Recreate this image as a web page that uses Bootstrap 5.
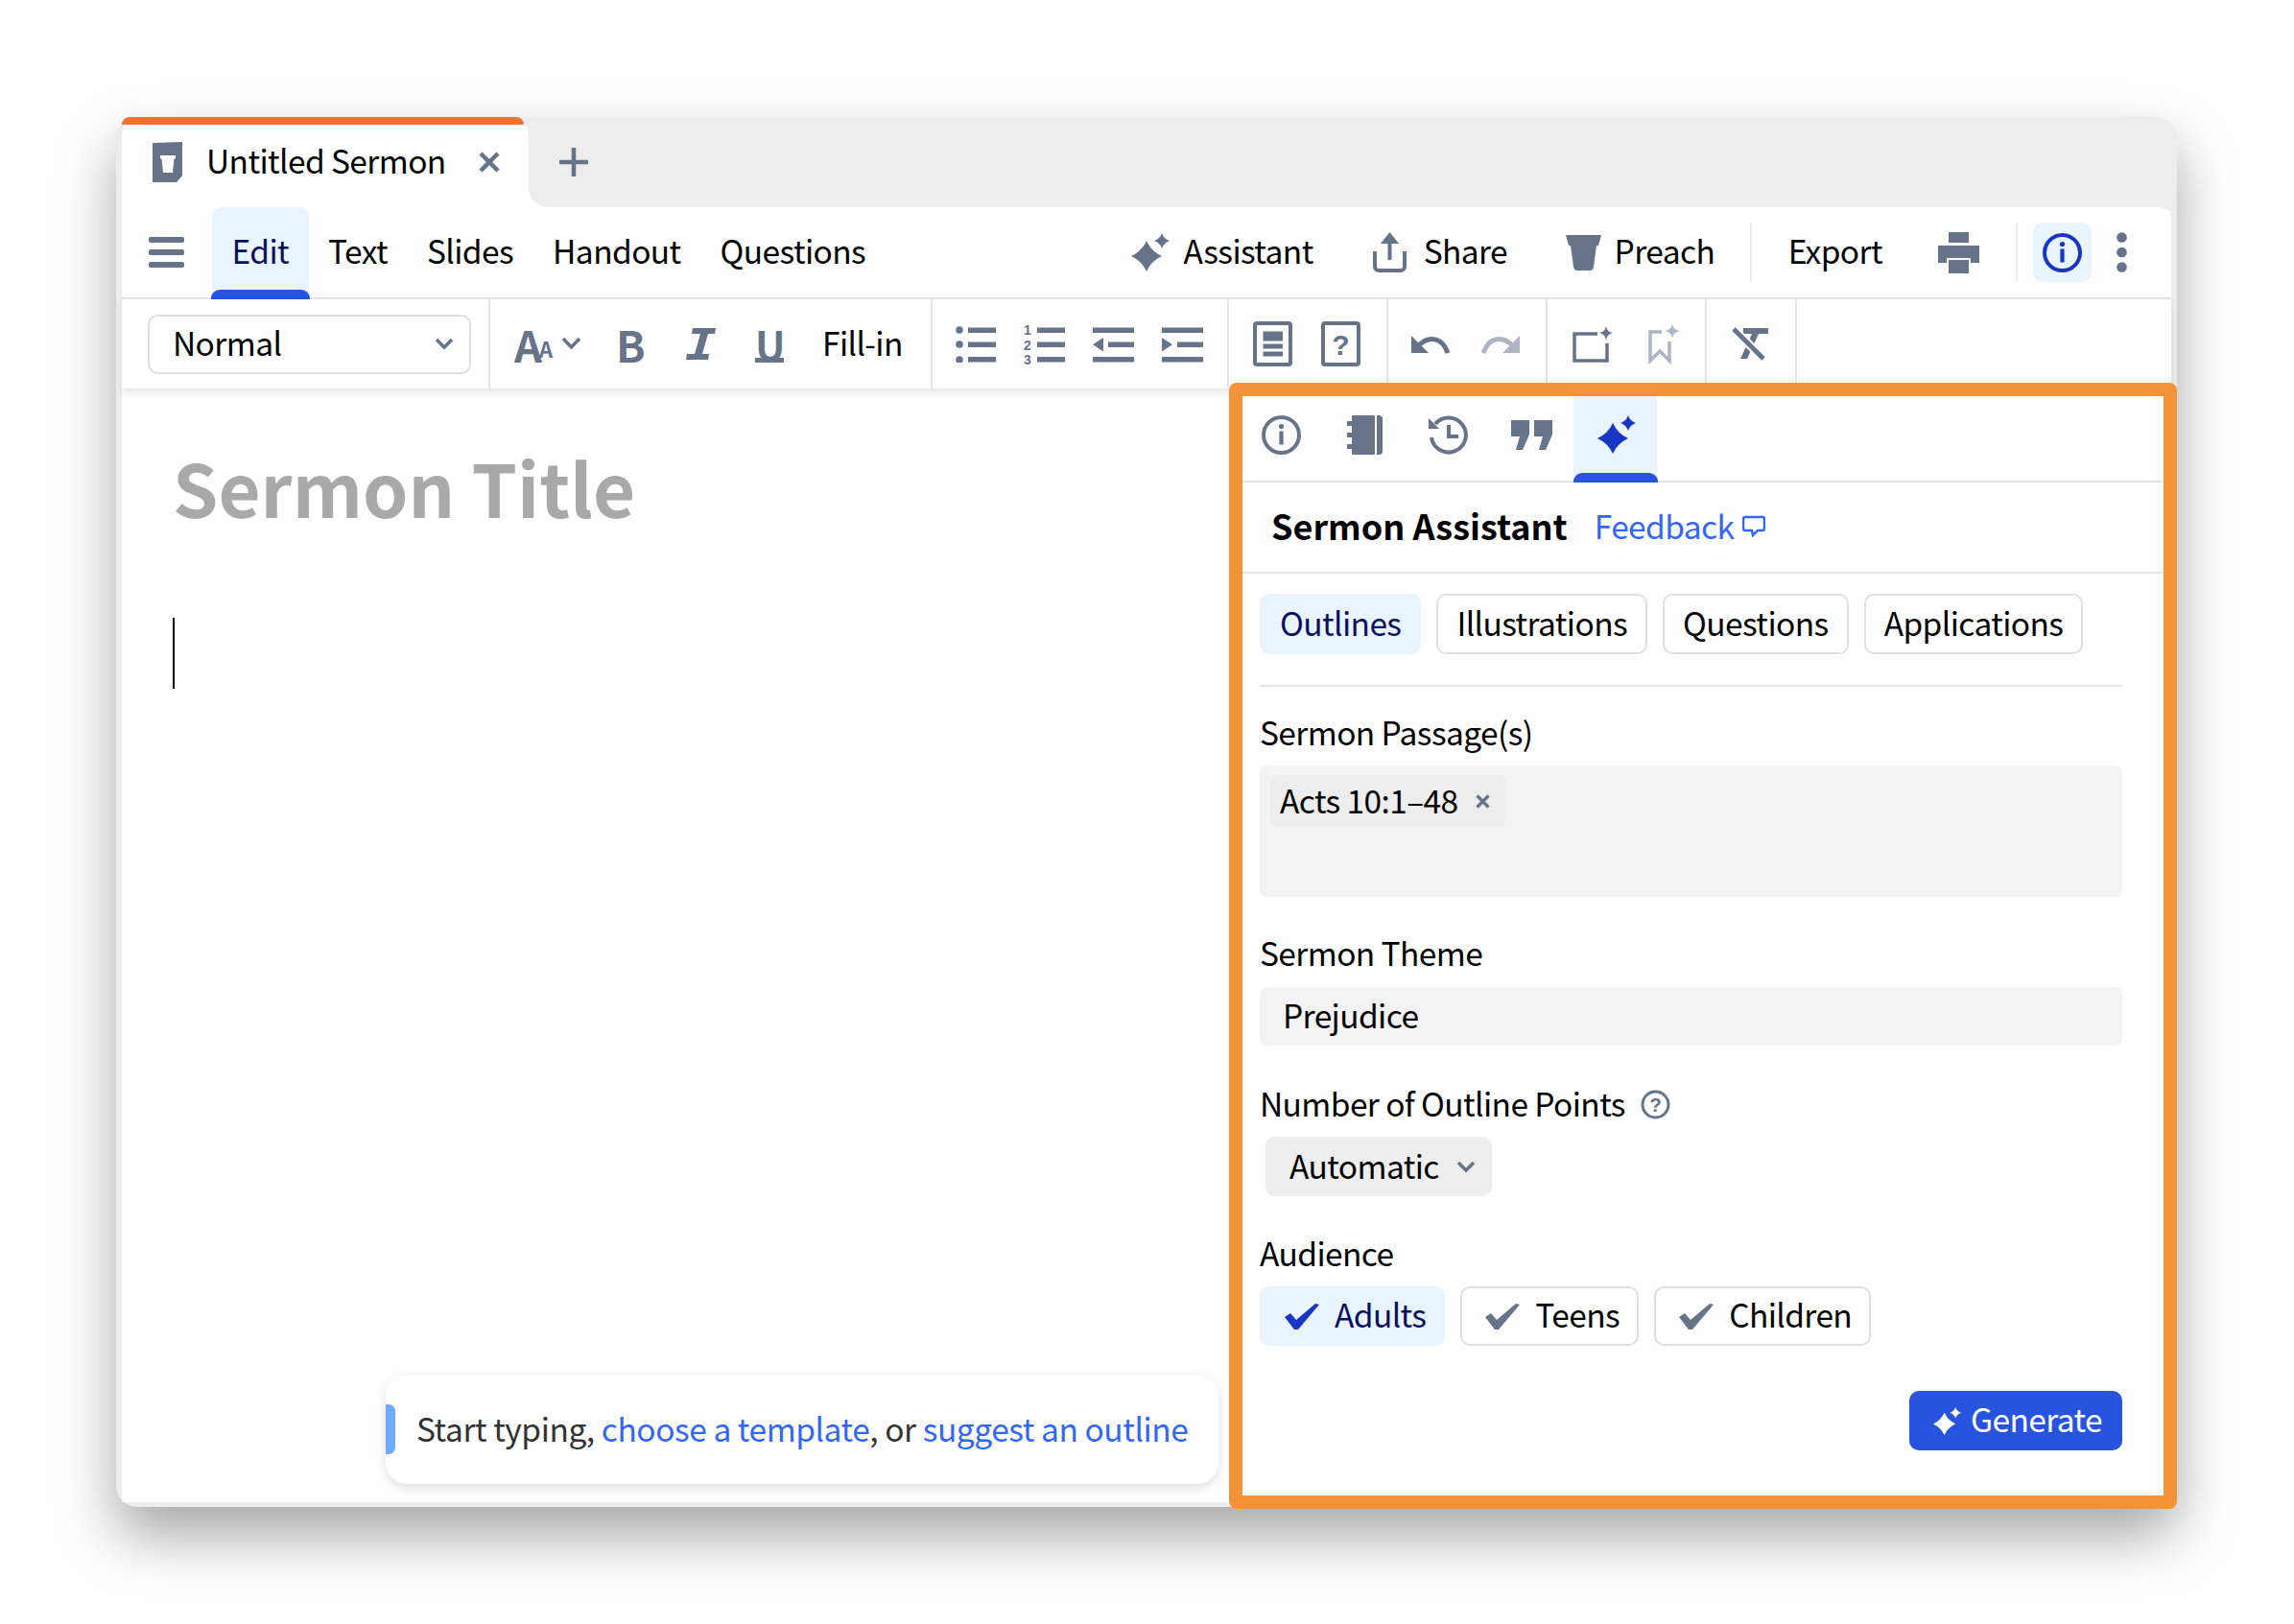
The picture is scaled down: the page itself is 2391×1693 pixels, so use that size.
<!DOCTYPE html>
<html lang="en">
<head>
<meta charset="utf-8">
<title>Untitled Sermon</title>
<link href="https://cdn.jsdelivr.net/npm/bootstrap@5.3.0/dist/css/bootstrap.min.css" rel="stylesheet">
<style>
html{background:#fff;overflow:hidden}
body{font-family:"Noto Sans CJK SC","Liberation Sans",sans-serif;color:#000;font-size:33.5px;letter-spacing:-.6px;line-height:44px;padding:122px 0 0 121px;min-height:100vh;background:#fff}
svg{display:block;flex:none}
.ico{color:#667389}
.lift{padding-bottom:4px}
.appwin{width:2148px;height:1449px;background:#ededed;border-radius:22px;box-shadow:0 30px 60px rgba(0,0,0,.35);padding:0 6px 5px}
.tabstrip{height:94px}
.doctab{position:relative;width:424px;background:#fff;border-radius:20px 20px 0 0;padding-left:32px}
.doctab::before{content:"";position:absolute;left:0;right:5px;top:0;height:8px;background:#f0722f;clip-path:inset(0 0 0 0 round 20px 20px 0 0)}
.tabtitle{margin-left:25px}
.tabx{margin-left:33px}
.tabrest{position:relative;padding-left:32px}
.tabrest::before{content:"";position:absolute;left:0;bottom:0;width:20px;height:20px;background:radial-gradient(circle at 100% 0,transparent 19.5px,#fff 20px)}
.sheet{background:#fff;height:1350px;border-top-right-radius:12px}
.menubar{height:96px;border-bottom:2px solid #e5e5e5}
.burger{margin-left:28px;margin-right:29px}
.menuitem{position:relative;padding:0 20.5px 4px;color:#000;display:flex;align-items:center;text-decoration:none}
.menuitem.on{background:#eaf4fe;color:#07105f;border-radius:10px 10px 0 0}
.menuitem.on::after{content:"";position:absolute;left:-1px;right:-1px;bottom:-2px;height:10px;background:#2753de;border-radius:9px 9px 0 0}
.acts{padding-right:46px}
.act1{gap:14.5px}
.act2{gap:18px;margin-left:62px}
.act3{gap:14px;margin-left:60.5px}
.vsep{width:2px;height:62px;background:#ececec}
.ml365{margin-left:36.5px}
.ml38{margin-left:38px}
.ml58{margin-left:58px}
.infobtn{margin-left:16px;width:61px;height:62px;background:#eaf4fe;border-radius:10px;color:#1935c4}
.dotsbtn{margin-left:26px}
.fmtbar{position:relative;height:93px;box-shadow:0 4px 8px rgba(0,0,0,.1)}
.fmtgrp{border-right:2px solid #e5e5e5;flex:none}
.g1{width:384px;padding-left:27px}
.g2{width:461px;padding-left:25px}
.g3{width:309px;padding-left:24px;gap:29px}
.g4{width:166px;padding-left:25px;gap:30px}
.g5{width:166px;padding-left:24px;gap:31px}
.g6{width:166px;padding-left:26px;gap:37px}
.g7{width:94px;padding-left:26px}
.stylesel{width:337px;height:62px;border:2px solid #e0e0e0;border-radius:10px;padding:0 50px 4px 24px;font-size:33.5px;letter-spacing:-.6px;line-height:44px;color:#000;font-family:inherit;background-position:right 16px center;background-size:20px 13px;background-image:url("data:image/svg+xml,%3Csvg xmlns='http://www.w3.org/2000/svg' viewBox='0 0 20 13'%3E%3Cpath d='M2 2l8 8 8-8' fill='none' stroke='%23667389' stroke-width='3.5'/%3E%3C/svg%3E")}
.glyphs{font-weight:700;color:#667389;letter-spacing:0;line-height:38px}
.gA{font-size:45px;width:26px;text-align:center}
.ga{font-size:22px;width:14px;text-align:center}
.aachev{margin-left:9px;margin-bottom:2px}
.gB{margin-left:36px;font-size:45px;width:26px;text-align:center}
.gI{margin-left:47px}
.gU{margin-left:41px;font-size:42px;width:30px;text-align:center;border-bottom:5px solid #667389;line-height:36px;height:38px;margin-top:1px}
.ml40{margin-left:40px}
.svt{font-family:"Liberation Sans",sans-serif;font-weight:700;fill:currentColor;letter-spacing:0}
.work{height:1161px}
.editor{position:relative;width:1154px;flex:none;padding-left:53px}
.doctitle{margin:62px 0 0;font-size:76px;line-height:80px;font-weight:700;color:#a9a9a9;font-family:inherit;letter-spacing:0}
.caret1{width:2px;height:74px;background:#000;margin-top:97px}
.hintbox{position:absolute;left:275px;top:1028px;width:868px;height:114px;background:#fff;border-radius:22px;box-shadow:0 4px 12px rgba(0,0,0,.13);padding:0 0 3px 32px;color:#333;letter-spacing:-.45px}
.hintbox::before{content:"";position:absolute;left:0;top:31px;width:10px;height:52px;background:#6eaaff;border-radius:0 7px 7px 0}
.lnk{color:#3466f6;text-decoration:none}
.aipanel{position:relative;z-index:2;width:988px;height:1174px;flex:none;margin:-6px -6px -7px 0;border:14px solid #f39237;border-radius:8px;background:#fff}
.icotabs{height:90px;border-bottom:2px solid #e5e5e5;padding:20px 0 0 20px}
.it2{margin-left:48px}.it3{margin-left:47px}.it4{margin-left:45px;margin-top:5px}
.sparktab{position:relative;margin:-20px 0 0 22px;width:87px;height:88px;background:#eaf4fe;padding:20px 0 0 25px;color:#1935c4}
.sparktab::after{content:"";position:absolute;left:0;right:-1px;bottom:-2px;height:10px;background:#2753de;border-radius:9px 9px 0 0}
.aihead{height:95px;border-bottom:2px solid #e5e5e5;padding-left:30px}
.aititle{font-weight:700;font-size:36px;margin:0;line-height:44px;font-family:inherit;letter-spacing:0;padding-bottom:6px}
.fdbk{margin-left:28px;padding-bottom:4px}
.fdbkico{margin-left:9px;margin-bottom:3px;color:#3466f6}
.aiform{padding:21px 43px 0 18px}
.pillrow{gap:16px;padding-bottom:32px;border-bottom:2px solid #e5e5e5}
.pillbtn{height:63px;padding:0 19px 4px;font-size:33.5px;letter-spacing:-.6px;line-height:44px;border:2px solid #e0e0e0;border-radius:10px;background:#fff;color:#000;font-family:inherit}
.pillbtn.on{background:#eaf4fe;border-color:#eaf4fe;color:#07105f}
.fieldlab{margin:0;display:flex;align-items:center;line-height:44px}
.lab1{margin:25px 0 13px}
.lab2{margin:36px 0 14px}
.lab3{margin:38px 0 13px}
.lab4{margin:37px 0 13px}
.psgbox{height:137px;background:#f3f3f3;border-radius:8px;padding:10px 11px}
.psgtag{height:54px;background:#ededed;border-radius:8px;padding:0 17px 3px 10px;gap:18px}
.tagx{margin-top:3px}
.themeinp{height:61px;background:#f3f3f3;border:0;border-radius:8px;padding:0 24px 4px;font-size:33.5px;letter-spacing:-.6px;color:#000;font-family:inherit;line-height:44px}
.helpico{margin-left:16px;margin-top:3px}
.countsel{width:236px;height:62px;margin-left:6px;border:0;border-radius:10px;background-color:#eee;padding:0 40px 3px 25px;font-size:33.5px;letter-spacing:-.6px;line-height:44px;color:#000;font-family:inherit;background-position:right 17px center;background-size:20px 13px;background-image:url("data:image/svg+xml,%3Csvg xmlns='http://www.w3.org/2000/svg' viewBox='0 0 20 13'%3E%3Cpath d='M2 2l8 8 8-8' fill='none' stroke='%23667389' stroke-width='3.5'/%3E%3C/svg%3E")}
.audrow{gap:16px}
.audbtn{height:62px;padding:0 18px 0 24px;gap:16px;display:flex;align-items:center;font-size:33.5px;letter-spacing:-.6px;line-height:44px;border:2px solid #e0e0e0;border-radius:10px;background:#fff;color:#000;font-family:inherit}
.audbtn.on{background:#eaf4fe;border-color:#eaf4fe;color:#07105f}
.audbtn.on svg{color:#1935c4}
.audbtn svg{color:#667389}
.genrow{margin-top:47px}
.genbtn{height:62px;padding:0 21px 0 25px;gap:10px;display:flex;align-items:center;background:#2753de;border:0;border-radius:10px;color:#fff;font-size:33.5px;letter-spacing:-.6px;line-height:44px;font-family:inherit}
.genbtn:hover{background:#2753de;color:#fff}
</style>
</head>
<body>
<svg width="0" height="0" class="position-absolute">
<defs>
<symbol id="spark" viewBox="0 0 40 40"><path fill="currentColor" d="M16 8Q21 19 32 24Q21 29 16 40Q11 29 0 24Q11 19 16 8Z"/><path fill="currentColor" d="M32 0Q34 6 40 8Q34 10 32 16Q30 10 24 8Q30 6 32 0Z"/></symbol>
<symbol id="infoc" viewBox="0 0 41 41"><circle cx="20.5" cy="20.5" r="18.5" fill="none" stroke="currentColor" stroke-width="4"/><circle cx="20.5" cy="11.5" r="2.6" fill="currentColor"/><rect x="18.4" y="16.5" width="4.2" height="14" fill="currentColor"/></symbol>
<symbol id="tick" viewBox="0 0 36 27"><path fill="currentColor" d="M0 14L6 10L12 17L32 0L36 1L14 27H10Z"/></symbol>
</defs>
</svg>

<div class="appwin d-flex flex-column">
  <div class="tabstrip d-flex">
    <div class="doctab d-flex align-items-center">
      <svg class="ico" width="31" height="42" viewBox="0 0 31 42"><path fill="currentColor" d="M0 1L31 0V35L25 42H0Z"/><path fill="#fff" d="M8 14H24V17.500H22.500L21 32H11L9.500 17.500H8Z"/></svg>
      <span class="tabtitle lift">Untitled Sermon</span>
      <svg class="ico tabx" width="24" height="22" viewBox="0 0 24 22"><path d="M3 2L21 20M21 2L3 20" stroke="currentColor" stroke-width="4.5" fill="none"/></svg>
    </div>
    <div class="tabrest flex-grow-1 d-flex align-items-center">
      <svg class="ico" width="30" height="30" viewBox="0 0 30 30"><path d="M15 1V29M1 15H29" stroke="currentColor" stroke-width="4.5" fill="none" stroke-linecap="round"/></svg>
    </div>
  </div>

  <div class="sheet d-flex flex-column">
    <div class="menubar d-flex align-items-stretch">
      <svg class="ico burger align-self-center" width="37" height="32" viewBox="0 0 37 32"><rect width="37" height="6" rx="2" fill="currentColor"/><rect y="13" width="37" height="6" rx="2" fill="currentColor"/><rect y="26" width="37" height="6" rx="2" fill="currentColor"/></svg>
      <nav class="nav flex-nowrap">
        <a class="menuitem on" href="#">Edit</a>
        <a class="menuitem" href="#">Text</a>
        <a class="menuitem" href="#">Slides</a>
        <a class="menuitem" href="#">Handout</a>
        <a class="menuitem" href="#">Questions</a>
      </nav>
      <div class="acts ms-auto d-flex align-items-center">
        <div class="d-flex align-items-center act1"><svg class="ico" width="40" height="40"><use href="#spark"/></svg><span class="lift">Assistant</span></div>
        <div class="d-flex align-items-center act2"><svg class="ico" width="35" height="42" viewBox="0 0 35 42"><path d="M2 20V36a4 4 0 0 0 4 4H29a4 4 0 0 0 4-4V20M17.5 8V29" fill="none" stroke="currentColor" stroke-width="4"/><path d="M17.5 0L8 12H27Z" fill="currentColor"/></svg><span class="lift">Share</span></div>
        <div class="d-flex align-items-center act3"><svg class="ico" width="37" height="37" viewBox="0 0 37 37"><path fill="currentColor" d="M0 0H37L34 11H32L29 33Q28.5 37 25 37H12Q8.500 37 8 33L5 11H3Z"/></svg><span class="lift">Preach</span></div>
        <div class="vsep ml365"></div>
        <span class="ml38 lift">Export</span>
        <svg class="ico ml58" width="43" height="43" viewBox="0 0 43 43"><rect x="11" width="21" height="11" fill="currentColor"/><rect y="14" width="43" height="18" fill="currentColor"/><rect x="9" y="27" width="25" height="16" fill="#fff"/><rect x="11" y="29" width="21" height="14" fill="currentColor"/></svg>
        <div class="vsep ml38"></div>
        <div class="infobtn d-flex align-items-center justify-content-center"><svg width="41" height="41"><use href="#infoc"/></svg></div>
        <svg class="ico dotsbtn" width="11" height="42" viewBox="0 0 11 42"><circle cx="5.500" cy="5.500" r="5.300" fill="currentColor"/><circle cx="5.500" cy="21" r="5.300" fill="currentColor"/><circle cx="5.500" cy="36.500" r="5.300" fill="currentColor"/></svg>
      </div>
    </div>

    <div class="fmtbar d-flex align-items-stretch">
      <div class="fmtgrp g1 d-flex align-items-center">
        <select class="form-select stylesel" aria-label="Style"><option>Normal</option></select>
      </div>
      <div class="fmtgrp g2 d-flex align-items-center">
        <span class="glyphs gA">A</span><span class="glyphs ga align-self-center mt-2">A</span>
        <svg class="ico aachev" width="21" height="14" viewBox="0 0 21 14"><path d="M2 2l8.500 9 8.500-9" fill="none" stroke="currentColor" stroke-width="3.500"/></svg>
        <span class="glyphs gB">B</span>
        <svg class="ico gI" width="31" height="33" viewBox="0 0 31 33"><path fill="currentColor" d="M7 0H31L30 6H23L17 27H24L23 33H0L1 27H9L15 6H6Z"/></svg>
        <span class="glyphs gU">U</span>
        <span class="ml40 lift">Fill-in</span>
      </div>
      <div class="fmtgrp g3 d-flex align-items-center">
        <svg class="ico" width="42" height="38" viewBox="0 0 42 38"><circle cx="4" cy="4" r="3.800" fill="currentColor"/><circle cx="4" cy="19" r="3.800" fill="currentColor"/><circle cx="4" cy="35" r="3.800" fill="currentColor"/><rect x="13" y="1.500" width="29" height="5.500" fill="currentColor"/><rect x="13" y="16.500" width="29" height="5.500" fill="currentColor"/><rect x="13" y="32" width="29" height="5.500" fill="currentColor"/></svg>
        <svg class="ico" width="43" height="48" viewBox="0 0 43 48"><text class="svt" x="0" y="13.500" font-size="14">1</text><text class="svt" x="0" y="29.500" font-size="14">2</text><text class="svt" x="0" y="44.500" font-size="14">3</text><rect x="14" y="6.500" width="29" height="5.500" fill="currentColor"/><rect x="14" y="21.500" width="29" height="5.500" fill="currentColor"/><rect x="14" y="37" width="29" height="5.500" fill="currentColor"/></svg>
        <svg class="ico" width="43" height="38" viewBox="0 0 43 38"><rect y="1.500" width="43" height="5.500" fill="currentColor"/><rect x="16" y="16.500" width="27" height="5.500" fill="currentColor"/><rect y="32" width="43" height="5.500" fill="currentColor"/><path d="M0 19.200L11 12V26.500Z" fill="currentColor"/></svg>
        <svg class="ico" width="43" height="38" viewBox="0 0 43 38"><rect y="1.500" width="43" height="5.500" fill="currentColor"/><rect x="16" y="16.500" width="27" height="5.500" fill="currentColor"/><rect y="32" width="43" height="5.500" fill="currentColor"/><path d="M11 19.200L0 12V26.500Z" fill="currentColor"/></svg>
      </div>
      <div class="fmtgrp g4 d-flex align-items-center">
        <svg class="ico" width="41" height="47" viewBox="0 0 41 47"><rect x="2" y="2" width="37" height="43" rx="2" fill="none" stroke="currentColor" stroke-width="4"/><rect x="10.500" y="10.500" width="20.500" height="10" fill="currentColor"/><rect x="10.500" y="23.500" width="20.500" height="5" fill="currentColor"/><rect x="10.500" y="31.500" width="20.500" height="5" fill="currentColor"/></svg>
        <svg class="ico" width="41" height="47" viewBox="0 0 41 47"><rect x="2" y="2" width="37" height="43" rx="2" fill="none" stroke="currentColor" stroke-width="4"/><text class="svt" x="20.500" y="35" font-size="30" text-anchor="middle">?</text></svg>
      </div>
      <div class="fmtgrp g5 d-flex align-items-center">
        <svg class="ico" width="41" height="20" viewBox="0 0 41 20"><path d="M0 1V19H18Z" fill="currentColor"/><path d="M7 12C16 2 31 0 38 19" fill="none" stroke="currentColor" stroke-width="5"/></svg>
        <svg width="41" height="20" viewBox="0 0 41 20"><path d="M41 1V19H23Z" fill="#adb4c2"/><path d="M34 12C25 2 10 0 3 19" fill="none" stroke="#adb4c2" stroke-width="5"/></svg>
      </div>
      <div class="fmtgrp g6 d-flex align-items-center">
        <svg class="ico" width="42" height="38" viewBox="0 0 42 38"><path d="M26 8H2V36H36V18" fill="none" stroke="currentColor" stroke-width="3.500"/><path d="M35 0Q36 6 42 7Q36 8 35 15Q34 8 28 7Q34 6 35 0Z" fill="currentColor"/></svg>
        <svg width="33" height="42" viewBox="0 0 33 42"><path d="M14 8H2V38L12 28L22 38V18" fill="none" stroke="#adb4c2" stroke-width="3.500"/><path d="M25 0Q26 6 33 7Q26 8 25 15Q24 8 17 7Q24 6 25 0Z" fill="#adb4c2"/></svg>
      </div>
      <div class="fmtgrp g7 d-flex align-items-center">
        <svg class="ico" width="38" height="35" viewBox="0 0 38 35"><rect x="12" y="1" width="26" height="6" fill="currentColor"/><path d="M21 7H28L16 33H9Z" fill="currentColor"/><path d="M2 2L33 33" stroke="#fff" stroke-width="9"/><path d="M2 2L33 33" stroke="currentColor" stroke-width="5"/></svg>
      </div>
    </div>

    <div class="work d-flex">
      <div class="editor">
        <h1 class="doctitle">Sermon Title</h1>
        <div class="caret1"></div>
        <div class="hintbox d-flex align-items-center">
          <span>Start typing, <a class="lnk" href="#">choose a template</a>, or <a class="lnk" href="#">suggest an outline</a></span>
        </div>
      </div>

      <aside class="aipanel">
        <div class="icotabs d-flex align-items-start">
          <svg class="ico" width="41" height="41"><use href="#infoc"/></svg>
          <svg class="ico it2" width="37" height="41" viewBox="0 0 37 41"><rect x="5" width="24" height="41" rx="1" fill="currentColor"/><path d="M31 0H33Q37 0 37 4V37Q37 41 33 41H31Z" fill="currentColor"/><rect y="6" width="5" height="5" fill="currentColor"/><rect y="18" width="5" height="5" fill="currentColor"/><rect y="30" width="5" height="5" fill="currentColor"/></svg>
          <svg class="ico it3" width="42" height="41" viewBox="0 0 42 41"><path d="M8 9A18 18 0 1 1 4 23" fill="none" stroke="currentColor" stroke-width="4"/><path d="M1 3V14H12Z" fill="currentColor"/><path d="M22 10V22H32" fill="none" stroke="currentColor" stroke-width="4"/></svg>
          <svg class="ico it4" width="43" height="31" viewBox="0 0 43 31"><path d="M0 0H19V15L12 31H5L9 17H0Z" fill="currentColor"/><path d="M24 0H43V15L36 31H29L33 17H24Z" fill="currentColor"/></svg>
          <div class="sparktab"><svg width="40" height="40"><use href="#spark"/></svg></div>
        </div>
        <div class="aihead d-flex align-items-center">
          <h2 class="aititle">Sermon Assistant</h2>
          <a class="lnk fdbk" href="#">Feedback</a>
          <svg class="fdbkico" width="24" height="23" viewBox="0 0 24 23"><path d="M3 2H21a2 2 0 0 1 2 2V14a2 2 0 0 1-2 2H16L11 21 10 16H3a2 2 0 0 1-2-2V4a2 2 0 0 1 2-2Z" fill="none" stroke="currentColor" stroke-width="2.500"/></svg>
        </div>
        <form class="aiform">
          <div class="pillrow d-flex">
            <button type="button" class="btn pillbtn on">Outlines</button>
            <button type="button" class="btn pillbtn">Illustrations</button>
            <button type="button" class="btn pillbtn">Questions</button>
            <button type="button" class="btn pillbtn">Applications</button>
          </div>
          <label class="fieldlab lab1">Sermon Passage(s)</label>
          <div class="psgbox">
            <span class="psgtag d-inline-flex align-items-center">Acts 10:1–48<svg class="ico tagx" width="15" height="15" viewBox="0 0 15 15"><path d="M1.500 1.500L13.500 13.500M13.500 1.500L1.500 13.500" stroke="currentColor" stroke-width="3.200" fill="none"/></svg></span>
          </div>
          <label class="fieldlab lab2">Sermon Theme</label>
          <input class="form-control themeinp" value="Prejudice" aria-label="Sermon Theme">
          <label class="fieldlab lab3">Number of Outline Points
            <svg class="ico helpico" width="31" height="31" viewBox="0 0 31 31"><circle cx="15.500" cy="15.500" r="13.500" fill="none" stroke="currentColor" stroke-width="3"/><text class="svt" x="15.500" y="23" font-size="20" text-anchor="middle">?</text></svg>
          </label>
          <select class="form-select countsel" aria-label="Number of Outline Points"><option>Automatic</option></select>
          <label class="fieldlab lab4">Audience</label>
          <div class="audrow d-flex">
            <button type="button" class="btn audbtn on"><svg width="36" height="27"><use href="#tick"/></svg><span class="lift">Adults</span></button>
            <button type="button" class="btn audbtn"><svg width="36" height="27"><use href="#tick"/></svg><span class="lift">Teens</span></button>
            <button type="button" class="btn audbtn"><svg width="36" height="27"><use href="#tick"/></svg><span class="lift">Children</span></button>
          </div>
          <div class="genrow d-flex justify-content-end">
            <button type="button" class="btn genbtn"><svg width="29" height="29"><use href="#spark"/></svg><span class="lift">Generate</span></button>
          </div>
        </form>
      </aside>
    </div>
  </div>
</div>
<script src="https://cdn.jsdelivr.net/npm/bootstrap@5.3.0/dist/js/bootstrap.bundle.min.js"></script>
</body>
</html>
